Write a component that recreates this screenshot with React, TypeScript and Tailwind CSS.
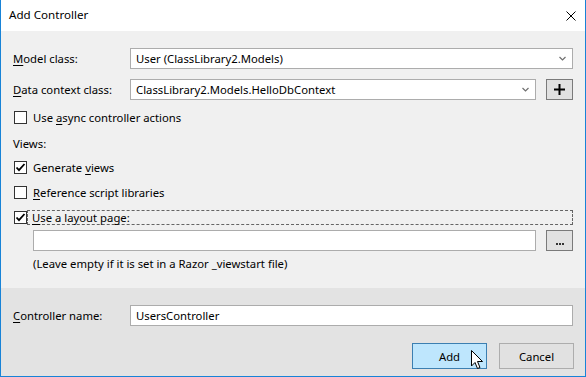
const font = { fontFamily: '"Segoe UI", "Noto Sans", sans-serif' }

const U = ({ c }: { c: string }) => <span className="underline underline-offset-2">{c}</span>

const Check = ({ on }: { on?: boolean }) => (
  <div className="w-[13px] h-[13px] bg-white border border-[#333333] flex items-center justify-center shrink-0">
    {on && (
      <svg width="11" height="11" viewBox="0 0 11 11">
        <path d="M1.5 5.5 L4 8.2 L9.5 2" fill="none" stroke="#000" strokeWidth="1.8" />
      </svg>
    )}
  </div>
)

const Chevron = () => (
  <svg width="7" height="5" viewBox="0 0 7 5" className="mr-[6px]">
    <path d="M0.5 1 L3.5 4 L6.5 1" fill="none" stroke="#707070" strokeWidth="1.2" />
  </svg>
)

const Combo = ({ text, w }: { text: string; w: string }) => (
  <div className={`${w} h-[21px] bg-white border border-[#acacac] flex items-center justify-between pl-[5px]`}>
    <span>{text}</span>
    <Chevron />
  </div>
)

const SmallBtn = ({ children }: { children: React.ReactNode }) => (
  <div className="w-[27px] h-[21px] bg-[#e1e1e1] border border-[#7a7a7a] flex items-center justify-center">
    {children}
  </div>
)

export default function App() {
  return (
    <div className="w-[586px] h-[377px] bg-white text-[11.3px] text-black" style={font}>
      <div className="w-full h-full flex flex-col border-l border-r border-b border-[#1883d7]">
        <div className="h-[31px] bg-white flex items-center justify-between pl-[8px] pr-[9px]">
          <span className="pb-[2px] text-[11.6px]">Add Controller</span>
          <svg width="10" height="10" viewBox="0 0 10 10">
            <path d="M0.5 0.5 L9.5 9.5 M9.5 0.5 L0.5 9.5" stroke="#000" strokeWidth="1" />
          </svg>
        </div>

        <div className="h-[257px] bg-[#f0f0f0] pl-[12px] pr-[12px] pt-[17px] leading-[15px]">
          <div className="flex items-center h-[21px]">
            <span className="w-[117px]"><U c="M" />odel class:</span>
            <Combo text="User (ClassLibrary2.Models)" w="w-[443px]" />
          </div>
          <div className="flex items-center h-[21px] mt-[10px]">
            <span className="w-[117px]"><U c="D" />ata context class:</span>
            <Combo text="ClassLibrary2.Models.HelloDbContext" w="w-[406px]" />
            <div className="ml-[10px]">
              <SmallBtn>
                <svg width="11" height="11" viewBox="0 0 11 11">
                  <path d="M5.5 0 V11 M0 5.5 H11" stroke="#000" strokeWidth="2" />
                </svg>
              </SmallBtn>
            </div>
          </div>

          <div className="flex items-center h-[15px] mt-[10px] pl-[1px] gap-[6px]">
            <Check />
            <span>Use <U c="a" />sync controller actions</span>
          </div>

          <div className="h-[15px] mt-[11px]">Views:</div>

          <div className="flex items-center h-[15px] mt-[9px] pl-[1px] gap-[6px]">
            <Check on />
            <span>Generate <U c="v" />iews</span>
          </div>

          <div className="flex items-center h-[15px] mt-[10px] pl-[1px] gap-[6px]">
            <Check />
            <span><U c="R" />eference script libraries</span>
          </div>

          <div className="flex items-center h-[15px] mt-[10px] pl-[1px]">
            <Check on />
            <div className="flex-1 h-[15px] border border-dashed border-[#646464] flex items-center pl-[4px]">
              <span><U c="U" />se a layout page:</span>
            </div>
          </div>

          <div className="flex items-center mt-[5px] pl-[20px]">
            <div className="w-[503px] h-[21px] bg-white border border-[#acacac]" />
            <div className="ml-[10px]">
              <SmallBtn>
                <div className="flex gap-[1px] mt-[6px]">
                  <span className="w-[2px] h-[2px] bg-[#333]" />
                  <span className="w-[2px] h-[2px] bg-[#333]" />
                  <span className="w-[2px] h-[2px] bg-[#333]" />
                </div>
              </SmallBtn>
            </div>
          </div>

          <div className="h-[15px] mt-[5px] pl-[20px]">(Leave empty if it is set in a Razor _viewstart file)</div>
        </div>

        <div className="flex-1 bg-[#e3e3e3] pl-[12px] pr-[11px] pt-[17px] leading-[15px]">
          <div className="flex items-center h-[21px]">
            <span className="w-[117px]"><U c="C" />ontroller name:</span>
            <div className="w-[443px] h-[21px] bg-white border border-[#acacac] flex items-center pl-[5px]">
              UsersController
            </div>
          </div>
          <div className="flex justify-end gap-[12px] mt-[17px]">
            <div className="relative w-[75px] h-[26px] bg-[#bee6fd] border border-[#3c7fb1] flex items-center justify-center">
              Add
              <svg width="13" height="20" viewBox="0 0 13 20" className="absolute left-[58px] top-[6px]">
                <path d="M0.5 0.5 V16 L4 12.5 L6.5 18.5 L9 17.5 L6.5 11.5 L11.5 11.5 Z" fill="#fff" stroke="#000" strokeWidth="1" />
              </svg>
            </div>
            <div className="w-[75px] h-[26px] bg-[#e1e1e1] border border-[#adadad] flex items-center justify-center">
              Cancel
            </div>
          </div>
        </div>
      </div>
    </div>
  )
}
